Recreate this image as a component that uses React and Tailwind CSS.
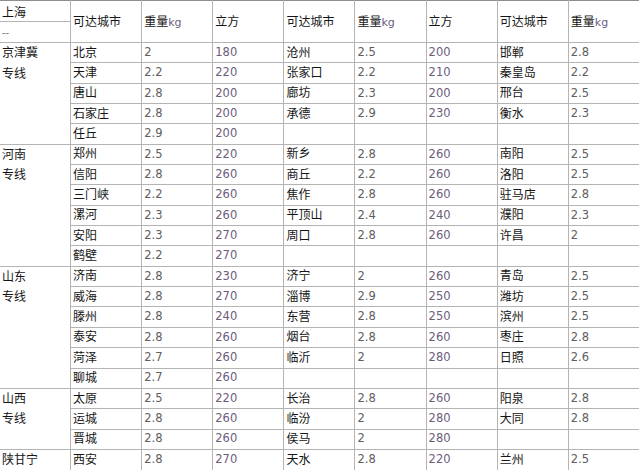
import React from 'react';

const blocks = [
  {
    name: ['京津冀', '专线'],
    rows: [
      ['北京', '2', '180', '沧州', '2.5', '200', '邯郸', '2.8'],
      ['天津', '2.2', '220', '张家口', '2.2', '210', '秦皇岛', '2.2'],
      ['唐山', '2.8', '200', '廊坊', '2.3', '200', '邢台', '2.5'],
      ['石家庄', '2.8', '200', '承德', '2.9', '230', '衡水', '2.3'],
      ['任丘', '2.9', '200', '', '', '', '', ''],
    ],
  },
  {
    name: ['河南', '专线'],
    rows: [
      ['郑州', '2.5', '220', '新乡', '2.8', '260', '南阳', '2.5'],
      ['信阳', '2.8', '260', '商丘', '2.2', '260', '洛阳', '2.5'],
      ['三门峡', '2.2', '260', '焦作', '2.8', '260', '驻马店', '2.8'],
      ['漯河', '2.3', '260', '平顶山', '2.4', '240', '濮阳', '2.3'],
      ['安阳', '2.3', '270', '周口', '2.8', '260', '许昌', '2'],
      ['鹤壁', '2.2', '270', '', '', '', '', ''],
    ],
  },
  {
    name: ['山东', '专线'],
    rows: [
      ['济南', '2.8', '230', '济宁', '2', '260', '青岛', '2.5'],
      ['威海', '2.8', '270', '淄博', '2.9', '250', '潍坊', '2.5'],
      ['滕州', '2.8', '240', '东营', '2.8', '250', '滨州', '2.5'],
      ['泰安', '2.8', '260', '烟台', '2.8', '260', '枣庄', '2.8'],
      ['菏泽', '2.7', '260', '临沂', '2', '280', '日照', '2.6'],
      ['聊城', '2.7', '260', '', '', '', '', ''],
    ],
  },
  {
    name: ['山西', '专线'],
    rows: [
      ['太原', '2.5', '220', '长治', '2.8', '260', '阳泉', '2.8'],
      ['运城', '2.8', '260', '临汾', '2', '280', '大同', '2.8'],
      ['晋城', '2.8', '260', '侯马', '2', '280', '', ''],
    ],
  },
  {
    name: ['陕甘宁'],
    rows: [['西安', '2.8', '270', '天水', '2.8', '220', '兰州', '2.5']],
  },
];

const cell = 'border border-[#b4b4b4] px-[2px] py-0 align-middle whitespace-nowrap overflow-hidden';

// column kinds repeat: city, weight, volume
const colorFor = (i) => {
  const k = i % 3;
  if (k === 1) return 'text-[#5e5e5e] text-[11.5px]';
  if (k === 2) return 'text-[#6d5c7d] text-[11.5px]';
  return 'text-[#151515] text-[12px]';
};

const headers = ['可达城市', '重量', '立方', '可达城市', '重量', '立方', '可达城市', '重量', ''];

const App = () => {
  return (
    <div className="w-[639px] h-[470px] overflow-hidden bg-white">
      <table
        className="table-fixed border-collapse ml-[-1px] leading-none w-[711px]"
        style={{ fontFamily: '"DejaVu Sans", "Noto Sans CJK SC", sans-serif' }}
      >
        <colgroup>
          {Array.from({ length: 10 }).map((_, i) => (
            <col key={i} className="w-[71.1px]" />
          ))}
        </colgroup>
        <thead>
          <tr className="h-[21px]">
            <td className={`${cell} pt-[3px] border-t-[#8e8e8e] text-[12px] text-[#151515]`}>上海</td>
            {headers.map((h, i) => (
              <td key={i} rowSpan={2} className={`${cell} border-t-[#8e8e8e] text-[12px] text-[#151515]`}>
                {h}
                {h === '重量' && <span className="text-[11px] text-[#6d5c7d]">kg</span>}
              </td>
            ))}
          </tr>
          <tr className="h-[21px]">
            <td className={`${cell} pt-[2px] text-[10px] text-[#777]`}>--</td>
          </tr>
        </thead>
        <tbody>
          {blocks.map((b, bi) =>
            b.rows.map((r, ri) => (
              <tr key={`${bi}-${ri}`} className="h-[20.35px]">
                {ri === 0 && (
                  <td rowSpan={b.rows.length} className={`${cell} align-top text-[12px] text-[#151515]`}>
                    {b.name.map((n) => (
                      <div key={n} className="h-[20.35px] flex items-center">{n}</div>
                    ))}
                  </td>
                )}
                {r.map((v, i) => (
                  <td key={i} className={`${cell} ${colorFor(i)}`}>{v}</td>
                ))}
                <td className={cell}></td>
              </tr>
            ))
          )}
        </tbody>
      </table>
    </div>
  );
};

export default App;
